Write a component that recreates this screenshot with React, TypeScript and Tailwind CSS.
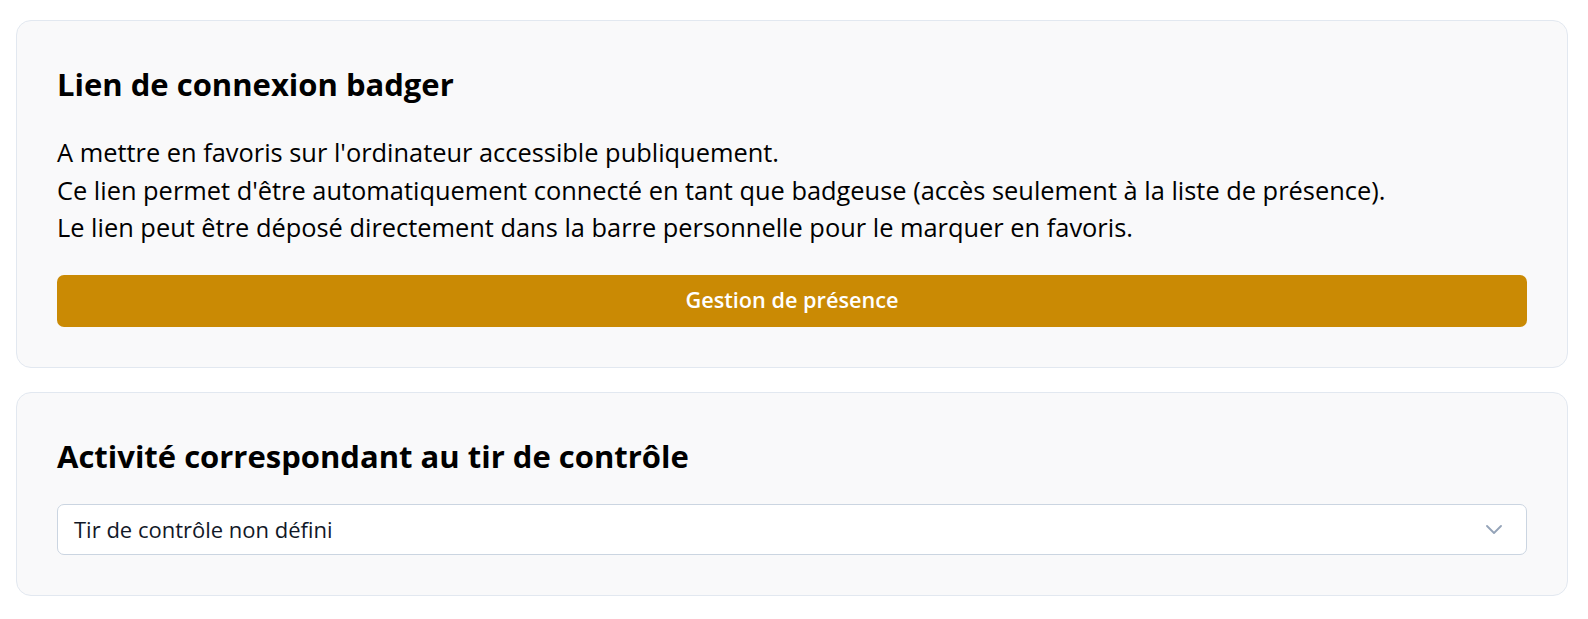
import React from "react";

const App = () => {
  return (
    <div
      className="min-h-screen bg-white pl-4 pr-5 pt-5 pb-6 text-black"
      style={{ fontFamily: '"Open Sans", "Noto Sans", sans-serif' }}
    >
      <div className="bg-[#f9f9fa] border border-[#e2e8f0] rounded-[15px] p-10">
        <h2 className="text-[31px] leading-[46px] font-bold text-black">Lien de connexion badger</h2>
        <div className="mt-[27px] text-[25.4px] leading-[37.5px] text-black">
          <p>A mettre en favoris sur l'ordinateur accessible publiquement.</p>
          <p>
            Ce lien permet d'être automatiquement connecté en tant que badgeuse (accès seulement à la liste de
            présence).
          </p>
          <p>Le lien peut être déposé directement dans la barre personnelle pour le marquer en favoris.</p>
        </div>
        <button className="mt-[28px] w-full h-[52px] rounded-[7px] bg-[#ca8a04] text-white text-[21.7px] font-semibold flex items-center justify-center">
          Gestion de présence
        </button>
      </div>

      <div className="mt-6 bg-[#f9f9fa] border border-[#e2e8f0] rounded-[15px] p-10">
        <h2 className="text-[31px] leading-[46px] font-bold text-black">Activité correspondant au tir de contrôle</h2>
        <div className="mt-[25px] h-[51px] bg-white border border-[#cbd5e1] rounded-[7px] flex items-center justify-between pl-4 pr-6">
          <span className="text-[22px] text-[#111827]">Tir de contrôle non défini</span>
          <svg width="16" height="9" viewBox="0 0 16 9" fill="none" className="text-[#94a3b8]">
            <polyline points="1,1 8,8 15,1" stroke="currentColor" strokeWidth="1.8" strokeLinecap="round" strokeLinejoin="round" />
          </svg>
        </div>
      </div>
    </div>
  );
};

export default App;
